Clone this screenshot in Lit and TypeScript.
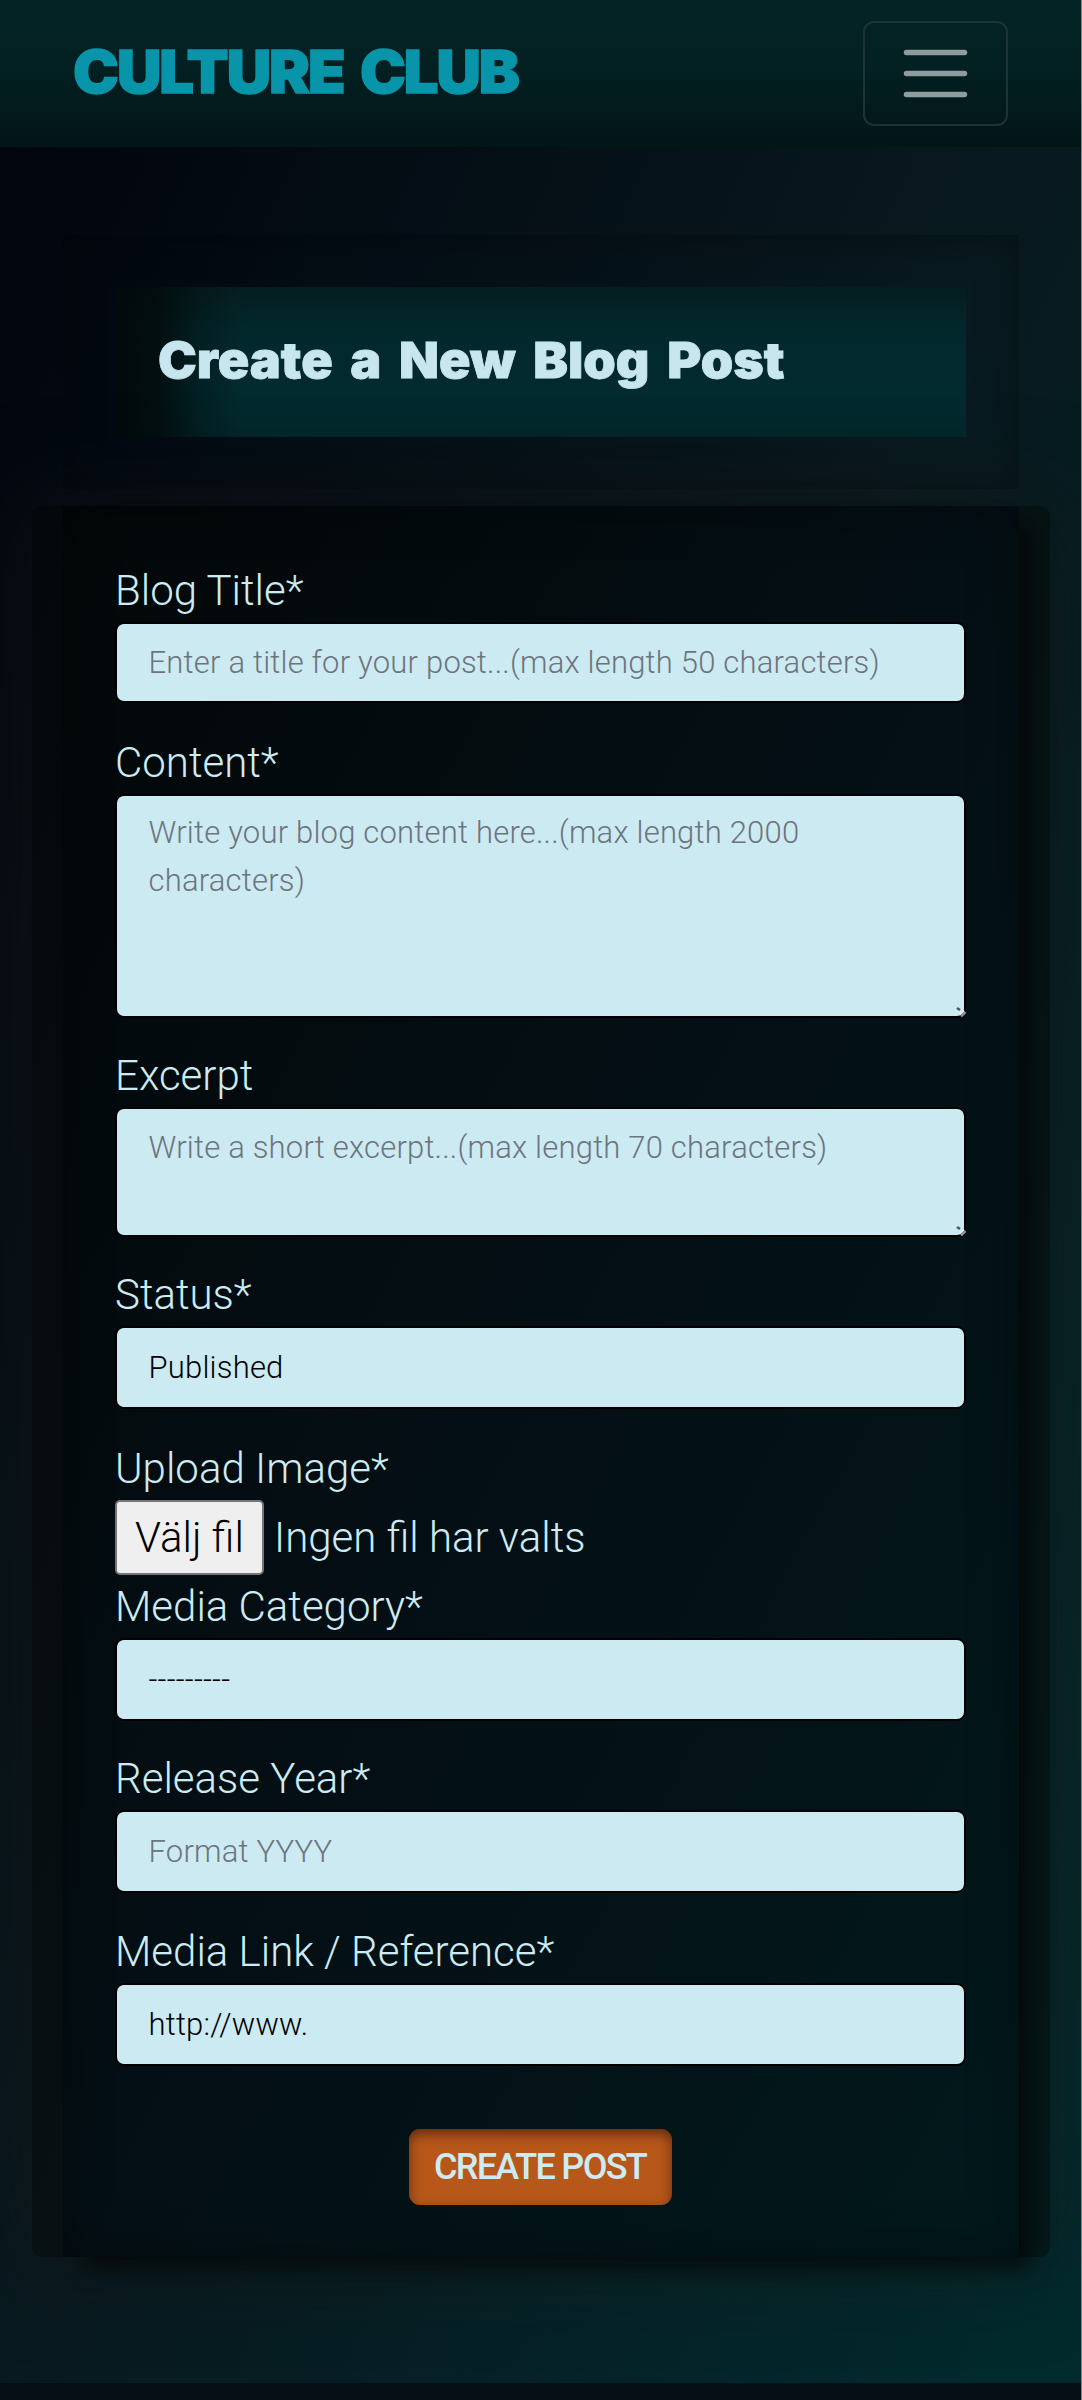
import { LitElement, html, css, svg, nothing } from "lit";
import { customElement, property } from "lit/decorators.js";

@customElement("blog-field")
class BlogField extends LitElement {
  @property() label = "";
  @property() kind = "text";
  @property() hint = "";
  @property() value = "";

  static styles = css`
    :host { display: block; }
    .label {
      display: block; height: 63px; line-height: 63px; font-size: 42px;
      color: #cdebf2; white-space: nowrap; width: max-content;
    }
    .frame { position: relative; display: flex; height: calc(100% - 63px); }
    .control {
      box-sizing: border-box; width: 851px; height: var(--box, 83px); margin: 0;
      border: 2px solid #000; border-radius: 9px; background: #cceaf2;
      padding: 0 31.5px; outline: none; appearance: none; resize: none; overflow: hidden;
      font: 300 31px/48px Roboto, sans-serif; letter-spacing: 0.2px; color: #000;
    }
    textarea.control { padding-top: var(--inset, 13px); }
    .control::placeholder { color: #6c757d; opacity: 1; }
    .grip { position: absolute; left: 841px; top: calc(var(--box) - 12px); width: 10px; height: 12px; }
    .file { display: flex; align-items: center; height: 75px; gap: 10px; font-size: 42px; color: #cdebf2; }
    .pick {
      box-sizing: border-box; width: 149px; height: 75px; border: 2px solid #767676; border-radius: 5px;
      background: #efefef; color: #000; font: 300 42px/69px Roboto, sans-serif; padding: 0; margin: 0;
    }
  `;

  private control() {
    switch (this.kind) {
      case "area":
        return html`<textarea class="control" placeholder=${this.hint}></textarea>
          <svg class="grip" viewBox="0 0 10 12">
            ${svg`<path d="M1 2L4 4" stroke="#4b555a" stroke-width="2.4"/><path d="M4 8L8 4.5" stroke="#eee" stroke-width="2.2"/><path d="M5 10.5L9.5 6" stroke="#999" stroke-width="2.4"/>`}
          </svg>`;
      case "select":
        return html`<select class="control"><option>${this.value}</option></select>`;
      case "file":
        return html`<div class="file"><button class="pick" type="button">${this.hint}</button><span>${this.value}</span></div>`;
      default:
        return html`<input class="control" placeholder=${this.hint || nothing} .value=${this.value} />`;
    }
  }

  render() {
    return html`<label class="label">${this.label}</label><div class="frame">${this.control()}</div>`;
  }
}

@customElement("app-root")
class AppRoot extends LitElement {
  static styles = css`
    :host {
      display: block; box-sizing: border-box; height: 2400px; overflow: hidden;
      font-family: Roboto, sans-serif; font-weight: 300; border-right: 1px solid #7b8587;
      background: linear-gradient(to bottom right, #01030c, #08191f 50%, #022b2e);
    }
    .page { display: flex; flex-direction: column; height: 2400px; }
    .bar {
      box-sizing: border-box; height: 147px; flex: none; padding: 0 73px 0 73px;
      display: flex; align-items: center; justify-content: space-between;
      background: linear-gradient(#032426, #032022 45%, #021517);
    }
    .brand {
      color: #0895aa; font: 900 59.5px/1 Inter, sans-serif; letter-spacing: -2px; white-space: nowrap;
      word-spacing: 6px; -webkit-text-stroke: 1.4px #0895aa; padding-bottom: 3px;
      transform: scaleX(1.033); transform-origin: left;
    }
    .toggle {
      box-sizing: border-box; width: 145px; height: 105px; border: 2px solid #1c3437; border-radius: 11px;
      background: none; display: flex; align-items: center; justify-content: center; padding: 0;
    }
    .bars { width: 79px; height: 79px; display: block; }
    .main { flex: none; height: 2236px; display: flex; flex-direction: column; }
    .hero {
      box-sizing: border-box; margin: 88px 0 17px 63px; width: 956px; height: 254px; padding: 52px 53px 52px 52px;
      box-shadow: inset 0 0 40px rgba(0, 0, 0, 0.35);
    }
    .title {
      box-sizing: border-box; height: 150px; margin: 0; padding: 0 0 4px 43px; display: flex; align-items: center;
      background:
        linear-gradient(90deg, #020a0b 0, rgba(2, 10, 11, 0.85) 5%, rgba(2, 10, 11, 0.3) 10%, transparent 15%),
        linear-gradient(#051d20, #02282c 30%, #022b2f 70%, #04272a);
      color: #c8e6ee; font: 900 50px/1 Inter, sans-serif; white-space: nowrap;
    }
    .words {
      word-spacing: 7px; -webkit-text-stroke: 0.8px #c8e6ee;
      transform: scaleX(1.04); transform-origin: left;
    }
    .card {
      box-sizing: border-box; width: 1018px; height: 1751px; margin-left: 32px; padding: 0 31px; border-radius: 10px;
      background: rgba(8, 7, 6, 0.5); box-shadow: 0 0 90px 5px rgba(25, 22, 20, 0.5);
    }
    .panel {
      box-sizing: border-box; height: 1751px; padding: 53px 52px 0;
      background: linear-gradient(to bottom right, #030708, #040f15 50%, #02191c);
      box-shadow: inset 0 0 50px rgba(0, 0, 0, 0.38), 16px 16px 18px -4px rgba(4, 5, 5, 0.7);
    }
    .form { display: grid; grid-template-rows: 172px 313px 219px 174px 138px 172px 173px 209px auto; }
    .short { --box: 81px; }
    .tall { --box: 224px; }
    .mid { --box: 130px; --inset: 15px; }
    .send {
      justify-self: center; width: 263px; height: 76px; border: 0; border-radius: 11px; padding: 0;
      margin-right: 2px;
      background: #b7571a; color: #cdebf2; font: 500 36px/1 Roboto, sans-serif; letter-spacing: -1.7px;
      box-shadow: inset 0 5px 12px rgba(40, 15, 10, 0.6); white-space: nowrap;
    }
    .foot { height: 17px; background: #060f16; }
  `;

  render() {
    return html`<div class="page">
      <header class="bar">
        <span class="brand">CULTURE CLUB</span>
        <button class="toggle" aria-label="Menu">
          <svg class="bars" viewBox="0 0 30 30">
            <path d="M4 7h22M4 15h22M4 23h22" fill="none" stroke="#8f9c9d" stroke-width="2.1" stroke-linecap="round" />
          </svg>
        </button>
      </header>
      <main class="main">
        <section class="hero"><h1 class="title"><span class="words">Create a New Blog Post</span></h1></section>
        <section class="card"><div class="panel"><form class="form">
          <blog-field class="short" label="Blog Title*" hint="Enter a title for your post...(max length 50 characters)"></blog-field>
          <blog-field class="tall" kind="area" label="Content*" hint="Write your blog content here...(max length 2000 characters)"></blog-field>
          <blog-field class="mid" kind="area" label="Excerpt" hint="Write a short excerpt...(max length 70 characters)"></blog-field>
          <blog-field kind="select" label="Status*" value="Published"></blog-field>
          <blog-field kind="file" label="Upload Image*" hint="Välj fil" value="Ingen fil har valts"></blog-field>
          <blog-field kind="select" label="Media Category*" value="---------"></blog-field>
          <blog-field label="Release Year*" hint="Format YYYY"></blog-field>
          <blog-field label="Media Link / Reference*" value="http://www."></blog-field>
          <button class="send" type="button">CREATE POST</button>
        </form></div></section>
      </main>
      <footer class="foot"></footer>
    </div>`;
  }
}
